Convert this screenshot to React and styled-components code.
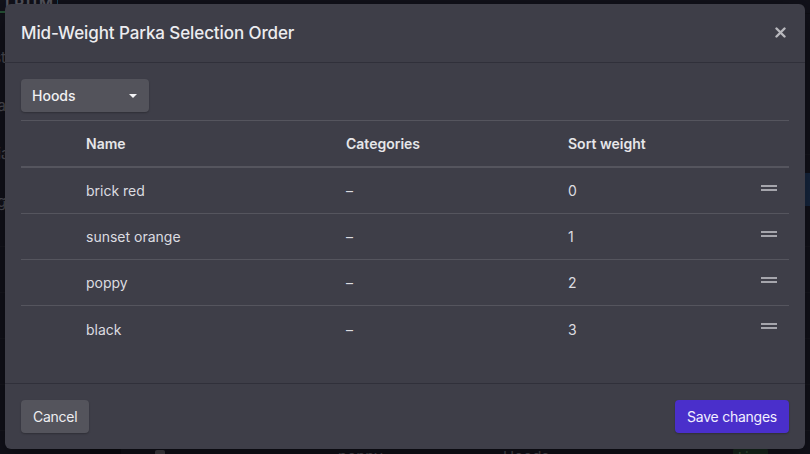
import React from "react";
import styled, { createGlobalStyle } from "styled-components";

const GlobalStyle = createGlobalStyle`
  html, body {
    margin: 0;
    padding: 0;
    background: #15151f;
    overflow: hidden;
  }
  body {
    font-family: Inter, "Noto Sans", sans-serif;
    -webkit-font-smoothing: antialiased;
  }
  * { box-sizing: border-box; }
`;

// ---- background page (sits behind the dialog) ----

const Page = styled.div`
  position: relative;
  width: 810px;
  height: 454px;
  overflow: hidden;
  background: #1b1b27;
`;

const TopBar = styled.div`
  height: 14px;
  display: flex;
  align-items: flex-end;
  border-bottom: 1px solid #14141c;
`;

const Logo = styled.div`
  width: 58px;
  height: 14px;
  margin-top: -6px;
  padding-right: 2px;
  border-right: 1px solid #2b7fa6;
  border-bottom: 2px solid #3f8f5a;
  color: #9a9aa6;
  font-size: 15px;
  font-weight: 700;
  letter-spacing: 2px;
  text-align: right;
  line-height: 10px;
  white-space: nowrap;
  overflow: hidden;
  direction: rtl;
`;

const Layout = styled.div`
  display: flex;
`;

const Sidebar = styled.div`
  width: 40px;
  margin-left: -34px;
  padding-top: 34px;
  display: flex;
  flex-direction: column;
  gap: 29px;
`;

const NavItem = styled.div`
  color: #8a8a96;
  font-size: 15px;
  text-align: right;
`;

const List = styled.div`
  flex: 1;
  padding-top: 95px;
  margin-left: -6px;
`;

const BgRow = styled.div`
  height: 46px;
  display: grid;
  grid-template-columns: 90px 65px 183px 165px 118px 112px 72px 1fr;
  align-items: center;
  border-bottom: 1px solid #23232f;
  color: #8a8a96;
  font-size: 15px;
`;

const Thumb = styled.div`
  grid-column: 2;
  width: 31px;
  height: 34px;
  background: #0e0e16;
`;

const Check = styled.div`
  width: 10px;
  height: 14px;
  background: #77777f;
  border-radius: 2px;
`;

const LiveBadge = styled.span`
  justify-self: start;
  padding: 1px 5px;
  background: #24482f;
  color: #6fb07c;
  font-size: 13px;
  border-radius: 3px;
`;

const RowAction = styled.div`
  height: 33px;
  margin-top: 18px;
  background: ${({ active }) => (active ? "#23426e" : "transparent")};
`;

const Shade = styled.div`
  position: absolute;
  inset: 0;
  background: rgba(8, 8, 14, 0.45);
`;

// ---- dialog ----

const Dialog = styled.div`
  position: absolute;
  top: 4px;
  left: 5px;
  width: 800px;
  height: 445px;
  background: #3e3e48;
  border-radius: 6px;
  box-shadow: 0 8px 30px rgba(0, 0, 0, 0.5);
  display: flex;
  flex-direction: column;
  overflow: hidden;
`;

const Header = styled.div`
  height: 59px;
  flex-shrink: 0;
  display: flex;
  align-items: center;
  justify-content: space-between;
  padding: 0 19px 1px 16px;
  border-bottom: 1px solid #30303a;
`;

const Title = styled.h2`
  margin: 0;
  font-size: 17px;
  font-weight: 500;
  letter-spacing: -0.1px;
  color: #ececef;
`;

const CloseButton = styled.button`
  border: 0;
  padding: 0;
  background: none;
  display: flex;
  cursor: pointer;
`;

const Body = styled.div`
  padding: 16px 16px 0;
`;

const Dropdown = styled.button`
  width: 128px;
  height: 33px;
  display: flex;
  align-items: center;
  justify-content: space-between;
  padding: 0 12px 0 11px;
  background: #53535b;
  border: 0;
  border-radius: 4px;
  box-shadow: 0 1px 2px rgba(0, 0, 0, 0.25);
  color: #f0f0f2;
  font-family: inherit;
  font-size: 14px;
  font-weight: 500;
`;

const Caret = styled.span`
  width: 0;
  height: 0;
  border-left: 4px solid transparent;
  border-right: 4px solid transparent;
  border-top: 4px solid #f4f4f6;
`;

const Table = styled.div`
  margin-top: 8px;
  border-top: 1px solid #55555e;
`;

const Row = styled.div`
  height: ${({ head }) => (head ? 47 : 46)}px;
  display: grid;
  grid-template-columns: 65px 260px 222px 1fr 40px;
  align-items: center;
  border-bottom: ${({ head }) => (head ? "2px" : "1px")} solid #55555e;
  &:last-child {
    border-bottom: 0;
  }
`;

const HeadCell = styled.div`
  grid-column: ${({ col }) => col};
  font-size: 14px;
  font-weight: 600;
  color: #e6e6e9;
`;

const Cell = styled.div`
  grid-column: ${({ col }) => col};
  font-size: 14px;
  color: #dcdce0;
`;

const Handle = styled.div`
  grid-column: 5;
  justify-self: end;
  padding-right: 12px;
  margin-top: -6px;
  display: flex;
`;

const Footer = styled.div`
  margin-top: auto;
  display: flex;
  justify-content: space-between;
  padding: 16px;
  border-top: 1px solid #30303a;
`;

const Button = styled.button`
  height: 33px;
  padding: 0 12px;
  border: 0;
  border-radius: 4px;
  background: ${({ primary }) => (primary ? "#4a2fcb" : "#54545c")};
  box-shadow: 0 1px 2px rgba(0, 0, 0, 0.25);
  color: ${({ primary }) => (primary ? "#f2f0ff" : "#ededf0")};
  font-family: inherit;
  font-size: 14px;
  letter-spacing: -0.25px;
  cursor: pointer;
`;

const items = [
  { name: "brick red", weight: 0 },
  { name: "sunset orange", weight: 1 },
  { name: "poppy", weight: 2 },
  { name: "black", weight: 3 },
];

// rows of the list behind the dialog; only the last one peeks out below it
const bgRows = [null, null, null, null, null, null, null, { name: "poppy", cat: "Hoods" }];

function App() {
  return (
    <>
      <GlobalStyle />
      <Page>
        <TopBar>
          <Logo>SPECTRUM</Logo>
        </TopBar>
        <Layout>
          <Sidebar>
            <NavItem>List</NavItem>
            <NavItem>Data</NavItem>
            <NavItem>Media</NavItem>
            <NavItem>Design</NavItem>
          </Sidebar>
          <List>
            {bgRows.map((r, i) => (
              <BgRow key={i}>
                <Thumb />
                <Check />
                <span>{r && r.name}</span>
                <span>{r && r.cat}</span>
                <span>{r && "–"}</span>
                {r ? <LiveBadge>Live</LiveBadge> : <span />}
                <RowAction active={i === 1} />
              </BgRow>
            ))}
          </List>
        </Layout>
        <Shade />

        <Dialog>
          <Header>
            <Title>Mid-Weight Parka Selection Order</Title>
            <CloseButton aria-label="Close">
              <svg width="11" height="11" viewBox="0 0 11 11">
                <path
                  d="M1.5 1.5 L9.5 9.5 M9.5 1.5 L1.5 9.5"
                  stroke="#b9b9be"
                  strokeWidth="2.4"
                  strokeLinecap="round"
                />
              </svg>
            </CloseButton>
          </Header>
          <Body>
            <Dropdown>
              Hoods
              <Caret />
            </Dropdown>
            <Table>
              <Row head>
                <HeadCell col={2}>Name</HeadCell>
                <HeadCell col={3}>Categories</HeadCell>
                <HeadCell col={4}>Sort weight</HeadCell>
              </Row>
              {items.map((it) => (
                <Row key={it.name}>
                  <Cell col={2}>{it.name}</Cell>
                  <Cell col={3}>–</Cell>
                  <Cell col={4}>{it.weight}</Cell>
                  <Handle>
                    <svg width="16" height="6" viewBox="0 0 16 6">
                      <path d="M0 1 H16 M0 5 H16" stroke="#c8c8cd" strokeWidth="1.5" />
                    </svg>
                  </Handle>
                </Row>
              ))}
            </Table>
          </Body>
          <Footer>
            <Button>Cancel</Button>
            <Button primary>Save changes</Button>
          </Footer>
        </Dialog>
      </Page>
    </>
  );
}

export default App;
